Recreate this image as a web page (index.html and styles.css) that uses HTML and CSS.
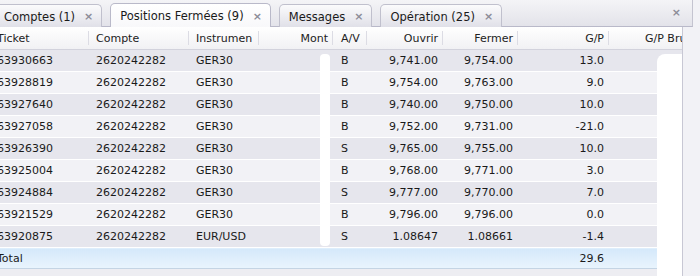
FILE: index.html
```html
<!DOCTYPE html>
<html lang="fr">
<head>
    <meta charset="UTF-8">
    <title>Positions Fermées</title>
    <link rel="stylesheet" href="styles.css">
</head>
<body>
    <div class="window">
        <div class="tabbar">
            <div class="tab first"><span>Comptes (1)</span><span class="close">×</span></div>
            <div class="tab active"><span>Positions Fermées (9)</span><span class="close">×</span></div>
            <div class="tab"><span>Messages</span><span class="close">×</span></div>
            <div class="tab"><span>Opération (25)</span><span class="close">×</span></div>
            <span class="bar-close">×</span>
        </div>

        <div class="grid">
            <table>
                <colgroup>
                    <col class="c-ticket"><col class="c-compte"><col class="c-instr"><col class="c-mont">
                    <col class="c-av"><col class="c-ouvrir"><col class="c-fermer"><col class="c-gp"><col class="c-brut">
                </colgroup>
                <thead>
                    <tr>
                        <th>Ticket</th><th>Compte</th><th>Instrumen</th><th class="num">Mont</th>
                        <th class="av">A/V</th><th class="num">Ouvrir</th><th class="num">Fermer</th>
                        <th class="num">G/P</th><th class="brut last">G/P Brut</th>
                    </tr>
                </thead>
                <tbody>
                    <tr><td>63930663</td><td>2620242282</td><td>GER30</td><td></td><td class="av">B</td><td class="num">9,741.00</td><td class="num">9,754.00</td><td class="num">13.0</td><td></td></tr>
                    <tr><td>63928819</td><td>2620242282</td><td>GER30</td><td></td><td class="av">B</td><td class="num">9,754.00</td><td class="num">9,763.00</td><td class="num">9.0</td><td></td></tr>
                    <tr><td>63927640</td><td>2620242282</td><td>GER30</td><td></td><td class="av">B</td><td class="num">9,740.00</td><td class="num">9,750.00</td><td class="num">10.0</td><td></td></tr>
                    <tr><td>63927058</td><td>2620242282</td><td>GER30</td><td></td><td class="av">B</td><td class="num">9,752.00</td><td class="num">9,731.00</td><td class="num">-21.0</td><td></td></tr>
                    <tr><td>63926390</td><td>2620242282</td><td>GER30</td><td></td><td class="av">S</td><td class="num">9,765.00</td><td class="num">9,755.00</td><td class="num">10.0</td><td></td></tr>
                    <tr><td>63925004</td><td>2620242282</td><td>GER30</td><td></td><td class="av">B</td><td class="num">9,768.00</td><td class="num">9,771.00</td><td class="num">3.0</td><td></td></tr>
                    <tr><td>63924884</td><td>2620242282</td><td>GER30</td><td></td><td class="av">S</td><td class="num">9,777.00</td><td class="num">9,770.00</td><td class="num">7.0</td><td></td></tr>
                    <tr><td>63921529</td><td>2620242282</td><td>GER30</td><td></td><td class="av">B</td><td class="num">9,796.00</td><td class="num">9,796.00</td><td class="num">0.0</td><td></td></tr>
                    <tr><td>63920875</td><td>2620242282</td><td>EUR/USD</td><td></td><td class="av">S</td><td class="num">1.08647</td><td class="num">1.08661</td><td class="num">-1.4</td><td></td></tr>
                </tbody>
                <tfoot>
                    <tr><td>Total</td><td></td><td></td><td></td><td></td><td></td><td></td><td class="num">29.6</td><td></td></tr>
                </tfoot>
            </table>
            <div class="strip"></div>

            <!-- traits blancs de masquage -->
            <div class="mask mask-mont"></div>
            <div class="mask mask-brut"></div>
        </div>
    </div>
</body>
</html>
```

FILE: styles.css
```css
body {
    margin: 0;
    font-family: 'DejaVu Sans', Verdana, sans-serif;
    font-size: 11px;
    color: #1a1a1a;
    background: #f2f2f6;
}

.window {
    width: 700px;
    height: 276px;
    overflow: hidden;
    position: relative;
}

/* Onglets */
.tabbar {
    height: 26px;
    display: flex;
    align-items: flex-end;
    gap: 8px;
    background: linear-gradient(#f4f4f7, #e3e3ea);
    border-bottom: 1px solid #b9b9c9;
    border-right: 1px solid #c4c4d0;
    width: 692px;
    position: relative;
}

.tab {
    height: 23px;
    display: flex;
    align-items: center;
    gap: 9px;
    padding: 1px 8px 0 9px;
    border: 1px solid #c0c0cd;
    border-bottom: none;
    border-radius: 5px 5px 0 0;
    background: linear-gradient(#fbfbfc, #e0e0e8);
    color: #1a1a1a;
    font-size: 11.5px;
    white-space: nowrap;
    margin-bottom: -1px;
    box-sizing: border-box;
}

.tab.first {
    margin-left: -6px;
}

.tab.active {
    height: 24px;
    background: linear-gradient(#ffffff, #f8f8fa);
    border-color: #b9b9c9;
}

.close {
    color: #8c8c98;
    font-weight: bold;
    font-size: 11px;
}

.bar-close {
    position: absolute;
    right: 11px;
    top: 6px;
    color: #8c8c98;
    font-weight: bold;
    font-size: 11px;
}

/* Grille */
.grid {
    position: relative;
    width: 692px;
    border-right: 1px solid #c8c8d4;
    overflow: hidden;
    margin-left: -10px;
}

table {
    border-collapse: collapse;
    table-layout: fixed;
    width: 713px;
}

.c-ticket { width: 99px; }
.c-compte { width: 100px; }
.c-instr { width: 70px; }
.c-mont { width: 74px; }
.c-av { width: 34px; }
.c-ouvrir { width: 76px; }
.c-fermer { width: 75px; }
.c-gp { width: 91px; }
.c-brut { width: 94px; }

th, td {
    text-align: left;
    padding: 0 6px 0 7px;
    white-space: nowrap;
    overflow: hidden;
}

th {
    height: 22px;
    font-weight: normal;
    color: #222;
    background: linear-gradient(#ffffff, #f1f1f4);
    border-bottom: 1px solid #d2d2dc;
    position: relative;
}

th::after {
    content: '';
    position: absolute;
    right: 0;
    top: 4px;
    bottom: 4px;
    width: 1px;
    background: #dcdce4;
}

th.last::after { display: none; }

th.brut { padding-left: 36px; padding-right: 0; }

td {
    height: 21px;
    border-bottom: 1px solid #ffffff;
    border-top: 1px solid #d9d9e1;
}

tbody tr:nth-child(odd) td { background: #e6e6ed; }
tbody tr:nth-child(even) td { background: #f2f2f6; }

tbody tr:first-child td { border-top: 1px solid #f6f6f9; }

.num { text-align: right; padding-right: 5px; }
.av { padding-left: 8px; }

tfoot td {
    height: 20px;
    background: linear-gradient(#d4e8fa, #e9f4fd);
    border-top: 1px solid #c8def0;
    border-bottom: 1px solid #c4d4e4;
}

.strip {
    height: 8px;
    background: #ededf2;
}

/* Masques */
.mask {
    position: absolute;
    background: #ffffff;
}

.mask-mont {
    left: 330px;
    top: 27px;
    width: 10px;
    height: 192px;
    border-radius: 4px;
}

.mask-brut {
    left: 667px;
    top: 27px;
    width: 40px;
    height: 235px;
    border-radius: 8px 0 0 12px;
}
```
